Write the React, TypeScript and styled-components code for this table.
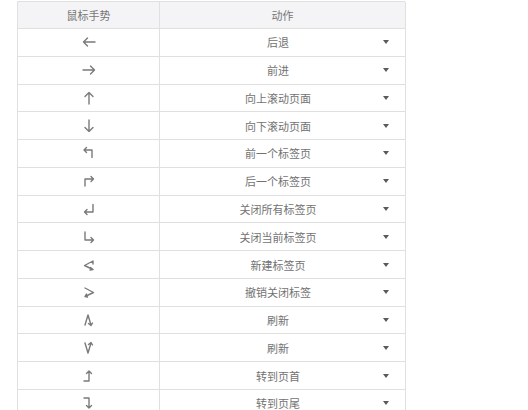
import React from "react";
import styled, { createGlobalStyle } from "styled-components";

const Global = createGlobalStyle`
  html, body { margin: 0; padding: 0; background: #fff; }
  body { font-family: "Noto Sans CJK SC", "Noto Sans", sans-serif; }
`;

const Page = styled.div`
  padding: 1px 0 0 17px;
`;

const Table = styled.div`
  width: 388px;
  display: grid;
  grid-template-columns: 142px 246px;
  border-top: 1px solid #e0e0e0;
  border-left: 1px solid #e0e0e0;
  box-sizing: border-box;
`;

const HeadCell = styled.div`
  height: 27px;
  box-sizing: border-box;
  background: #f4f4f6;
  border-right: 1px solid #e0e0e0;
  border-bottom: 1px solid #e0e0e0;
  display: flex;
  align-items: center;
  justify-content: center;
  font-size: 11px;
  color: #777;
`;

const Cell = styled.div`
  height: 27.77px;
  box-sizing: border-box;
  border-right: 1px solid #e0e0e0;
  border-bottom: 1px solid #e0e0e0;
  display: flex;
  align-items: center;
  justify-content: center;
  font-size: 11px;
  color: #727272;
`;

const ActionCell = styled(Cell)`
  padding: 0 16px 0 13px;
  justify-content: space-between;
`;

const Label = styled.span`
  flex: 1;
  text-align: center;
  white-space: nowrap;
`;

const Caret = styled.span`
  width: 0;
  height: 0;
  border-left: 3.5px solid transparent;
  border-right: 3.5px solid transparent;
  border-top: 4px solid #5a5a5a;
`;

const Icon = styled.svg`
  width: 14px;
  height: 14px;
  fill: none;
  stroke: #7a7a7a;
  stroke-width: 1.4;
  stroke-linecap: round;
  stroke-linejoin: round;
`;

type Row = { d: string; label: string };

const rows: Row[] = [
  { d: "M13 7H1.5 M5.5 3L1.5 7l4 4", label: "后退" },
  { d: "M1 7h11.5 M8.5 3l4 4-4 4", label: "前进" },
  { d: "M7 13V1.5 M3 5.5l4-4 4 4", label: "向上滚动页面" },
  { d: "M7 1v11.5 M3 8.5l4 4 4-4", label: "向下滚动页面" },
  { d: "M2 4h8v7.5 M4.5 1.5L2 4l2.5 2.5", label: "前一个标签页" },
  { d: "M3 12V5h8.5 M9 2.5l2.5 2.5L9 7.5", label: "后一个标签页" },
  { d: "M11 2.5v7.5H2.5 M5 7.5L2.5 10 5 12.5", label: "关闭所有标签页" },
  { d: "M3 2v8h8.5 M9 7.5l2.5 2.5L9 12.5", label: "关闭当前标签页" },
  { d: "M11 3L2.5 7.5l8.5 4 M11 3v3 M8.5 9.5l2.5 2-3 .5", label: "新建标签页" },
  { d: "M3 3l8.5 4.5-8.5 4 M5.5 12l-2.5-.5 1.5-2.5", label: "撤销关闭标签" },
  { d: "M3 12l3-10 3 10 M6.5 10.5L9 12.5l1.5-2.5", label: "刷新" },
  { d: "M3 2l3 10 3-10 M6.5 3.5L9 1.5l1.5 2.5", label: "刷新" },
  { d: "M2 12h5V2 M4.5 4.5L7 2l2.5 2.5", label: "转到页首" },
  { d: "M2 2h5v10 M4.5 9.5L7 12l2.5-2.5", label: "转到页尾" },
];

export default function App() {
  return (
    <Page>
      <Global />
      <Table>
        <HeadCell>鼠标手势</HeadCell>
        <HeadCell>动作</HeadCell>
        {rows.map((r, i) => (
          <React.Fragment key={i}>
            <Cell>
              <Icon viewBox="0 0 14 14">
                <path d={r.d} />
              </Icon>
            </Cell>
            <ActionCell>
              <Label>{r.label}</Label>
              <Caret />
            </ActionCell>
          </React.Fragment>
        ))}
      </Table>
    </Page>
  );
}
